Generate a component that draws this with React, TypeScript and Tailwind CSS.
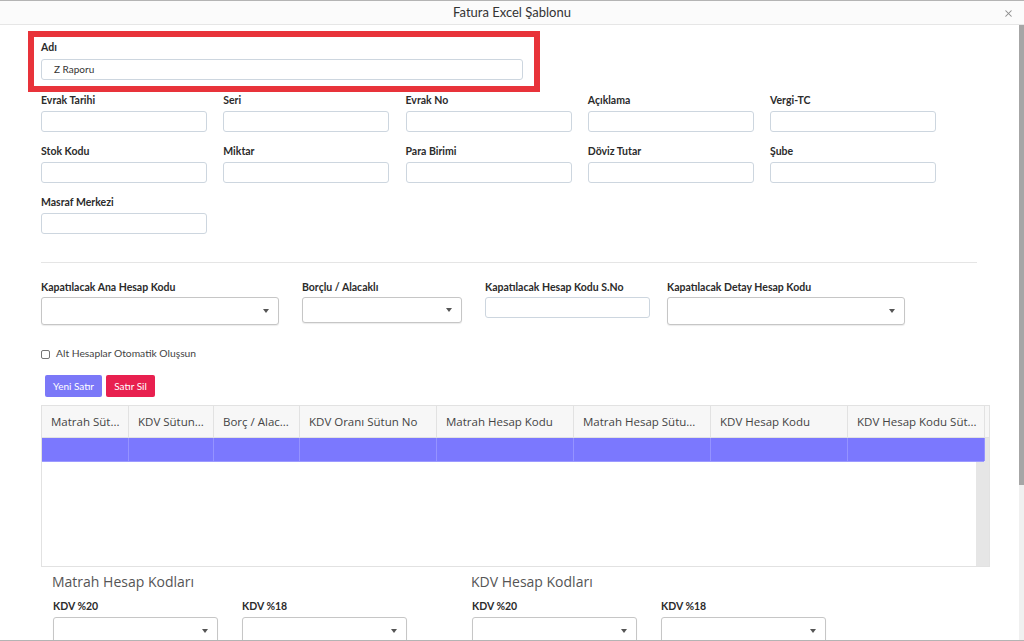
import { X } from "lucide-react";

const rows1 = [
  ["Evrak Tarihi", "Seri", "Evrak No", "Açıklama", "Vergi-TC"],
  ["Stok Kodu", "Miktar", "Para Birimi", "Döviz Tutar", "Şube"],
  ["Masraf Merkezi"],
];

const columns = [
  { title: "Matrah Süt...", w: 87 },
  { title: "KDV Sütun...", w: 85 },
  { title: "Borç / Alac...", w: 86 },
  { title: "KDV Oranı Sütun No", w: 137 },
  { title: "Matrah Hesap Kodu", w: 137 },
  { title: "Matrah Hesap Sütu...", w: 137 },
  { title: "KDV Hesap Kodu", w: 137 },
  { title: "KDV Hesap Kodu Süt...", w: 137 },
];

function Label({ children }: { children: React.ReactNode }) {
  return <div className="h-[14px] text-[10.5px] leading-[14px] font-bold text-[#2b2b2b]">{children}</div>;
}

function TextInput({ className = "", value }: { className?: string; value?: string }) {
  return (
    <div
      className={`h-[21px] rounded-[3px] border border-[#cdd6df] bg-white pl-[12px] text-[10px] leading-[19px] text-[#333] ${className}`}
    >
      {value}
    </div>
  );
}

function Select({ className = "" }: { className?: string }) {
  return (
    <div
      className={`flex items-center justify-end rounded-[3px] border border-[#c6c6c6] bg-white pr-[9px] shadow-[0_1px_1px_rgba(0,0,0,0.08)] ${className}`}
    >
      <svg width="6" height="4" viewBox="0 0 6 4">
        <path d="M0 0 L6 0 L3 4 Z" fill="#555" />
      </svg>
    </div>
  );
}

export default function App() {
  return (
    <div className="flex h-[641px] w-[1024px] flex-col overflow-hidden border-y border-[#b4b4b4] bg-white font-['Lato','Open_Sans',sans-serif]">
      {/* Title bar */}
      <div className="relative flex h-[24px] shrink-0 items-center justify-center border-b border-[#e6e6e6] bg-[#fbfbfb]">
        <span className="text-[13px] text-[#333]">Fatura Excel Şablonu</span>
        <X size={11} strokeWidth={2.2} className="absolute right-[10px] top-[7px] text-[#8a8a8a]" />
      </div>

      <div className="flex min-h-0 flex-1">
        <div className="min-w-0 flex-1 pl-[28px] pt-[6px]">
          {/* Highlighted name field */}
          <div className="h-[61px] w-[512px] border-[6px] border-[#e8333a] pl-[7px] pr-[11px] pt-[3px]">
            <Label>Adı</Label>
            <TextInput className="mt-[5px]" value="Z Raporu" />
          </div>

          <div className="ml-[13px]">
            <div className="mt-[1px] flex flex-col gap-y-[12px]">
              {rows1.map((row, i) => (
                <div key={i} className="flex gap-x-[16.25px]">
                  {row.map((l) => (
                    <div key={l} className="w-[166px]">
                      <Label>{l}</Label>
                      <TextInput className="mt-[4px]" />
                    </div>
                  ))}
                </div>
              ))}
            </div>

            <div className="mt-[28px] h-px w-[936px] bg-[#e5e5e5]" />

            <div className="mt-[17px] flex items-start">
              <div className="w-[238px]">
                <Label>Kapatılacak Ana Hesap Kodu</Label>
                <Select className="mt-[3px] h-[28px]" />
              </div>
              <div className="ml-[23px] w-[160px]">
                <Label>Borçlu / Alacaklı</Label>
                <Select className="mt-[3px] h-[26px]" />
              </div>
              <div className="ml-[23px] w-[165px]">
                <Label>Kapatılacak Hesap Kodu S.No</Label>
                <TextInput className="mt-[3px]" />
              </div>
              <div className="ml-[17px] w-[238px]">
                <Label>Kapatılacak Detay Hesap Kodu</Label>
                <Select className="mt-[3px] h-[28px]" />
              </div>
            </div>

            <label className="mt-[22px] flex h-[14px] items-center gap-[6px]">
              <span className="h-[9px] w-[9px] rounded-[2px] border border-[#767676] bg-white" />
              <span className="text-[10.3px] text-[#444]">Alt Hesaplar Otomatik Oluşsun</span>
            </label>

            <div className="ml-[4px] mt-[14px] flex gap-[4px]">
              <button className="h-[22px] w-[57px] rounded-[2px] bg-[#7b78f8] text-[10px] text-white">Yeni Satır</button>
              <button className="h-[22px] w-[49px] rounded-[2px] bg-[#e8204f] text-[10px] text-white">Satır Sil</button>
            </div>

            {/* Grid */}
            <div className="mt-[8px] h-[162px] w-[949px] border border-[#e2e2e2] font-['Open_Sans',sans-serif]">
              <div className="flex h-[32px] border-b border-[#e2e2e2] bg-[#f7f7f7]">
                {columns.map((c) => (
                  <div
                    key={c.title}
                    style={{ width: c.w }}
                    className="flex shrink-0 items-center border-r border-[#e2e2e2] pl-[9px] text-[11.5px] text-[#444]"
                  >
                    {c.title}
                  </div>
                ))}
                <div className="flex-1" />
              </div>
              <div className="relative h-[128px]">
                <div className="absolute bottom-0 right-0 top-0 w-[13px] bg-[#e6e6e6]" />
                <div className="relative flex h-[24px] w-[942px] border-b border-[#9c9aff] bg-[#7b78fe]">
                  {columns.map((c) => (
                    <div key={c.title} style={{ width: c.w }} className="shrink-0 border-r border-[#9593ff]" />
                  ))}
                </div>
              </div>
            </div>

            {/* Account code sections */}
            <div className="ml-[11px] mt-[5px] flex">
              {["Matrah Hesap Kodları", "KDV Hesap Kodları"].map((h) => (
                <div key={h} className="w-[419px]">
                  <div className="h-[20px] font-['Open_Sans',sans-serif] text-[14px] leading-[20px] text-[#555]">{h}</div>
                  <div className="ml-[1px] mt-[7px] flex gap-x-[24px]">
                    {["KDV %20", "KDV %18"].map((l) => (
                      <div key={l} className="w-[165px]">
                        <Label>{l}</Label>
                        <Select className="mt-[4px] h-[28px]" />
                      </div>
                    ))}
                  </div>
                </div>
              ))}
            </div>
          </div>
        </div>

        {/* Window scrollbar */}
        <div className="w-[5px] shrink-0 bg-[#f0f0f0]">
          <div className="h-[460px] bg-[#a6a6a6]" />
        </div>
      </div>
    </div>
  );
}
